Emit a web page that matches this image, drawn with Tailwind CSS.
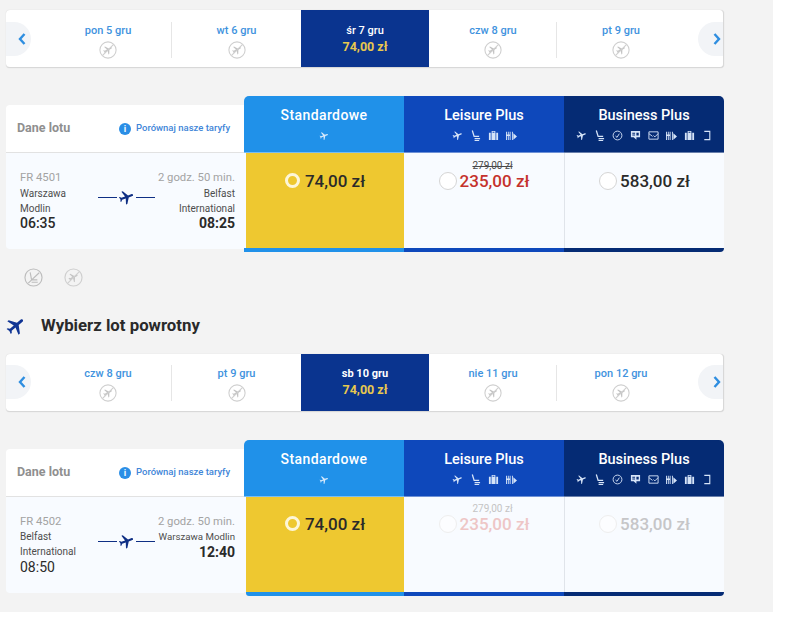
<!DOCTYPE html>
<html lang="pl">
<head>
    <meta charset="UTF-8">
    <meta name="viewport" content="width=device-width, initial-scale=1.0">
    <title>Wybierz lot</title>
    <script src="https://cdn.jsdelivr.net/npm/@tailwindcss/browser@4"></script>
</head>
<body class="bg-white font-['Roboto',sans-serif]">
    <!-- Shared icons -->
    <svg class="hidden">
        <symbol id="plane" viewBox="0 0 24 24"><path fill="currentColor" d="M21 16v-2l-8-5V3.5c0-.83-.67-1.5-1.5-1.5S10 2.67 10 3.5V9l-8 5v2l8-2.5V19l-2 1.5V22l3.5-1 3.5 1v-1.5L13 19v-5.5l8 2.5z"/></symbol>
        <symbol id="seat" viewBox="0 0 12 12"><path fill="none" stroke="currentColor" stroke-width="1.4" d="M2.5 .5 4.5 7H10M5 9.5h6M5 11.5h5"/></symbol>
        <symbol id="clock" viewBox="0 0 12 12"><circle cx="6" cy="6" r="4.8" fill="none" stroke="currentColor"/><path fill="none" stroke="currentColor" d="M3.8 6.5 5.5 8 8 4"/></symbol>
        <symbol id="card" viewBox="0 0 12 12"><path fill="currentColor" d="M1 1h10v7H7v2.5L4 8H1zM2.5 3v1h3V3zm0 2v1h3V5zM7 3v3h2.5V3z"/></symbol>
        <symbol id="mail" viewBox="0 0 12 12"><path fill="none" stroke="currentColor" d="M1 2h10v8H1zM1 4l4 3M11 4 7.5 7.5 6 6"/></symbol>
        <symbol id="food" viewBox="0 0 12 12"><path fill="currentColor" d="M0 2h1v9H0zM2 2h1v9H2zM4 2h1v9H4zM0 5h5v1.5H0zM6.5 2h1v9h-1zM8 3.5 12 7l-4 3.5z"/></symbol>
        <symbol id="bag" viewBox="0 0 12 12"><path fill="currentColor" d="M4 1h4v2h3v8H1V3h3zm1 1v1h2V2zM3 3v8h.8V3zm5.2 0v8H9V3z"/></symbol>
        <symbol id="phone" viewBox="0 0 12 12"><path fill="none" stroke="currentColor" stroke-width="1.2" d="M2.5 1.5h6v9h-6"/></symbol>
        <symbol id="noflight" viewBox="0 0 20 20">
            <circle cx="10" cy="10" r="9" fill="none" stroke="#cfcfcf" stroke-width="1.2"/>
            <use href="#plane" x="4" y="4" width="12" height="12" transform="rotate(60 10 10)" class="text-[#c4c4c4]"/>
            <path stroke="#cfcfcf" stroke-width="1.2" d="M4 16 16 4"/>
        </symbol>
        <symbol id="noseat" viewBox="0 0 20 20">
            <circle cx="10" cy="10" r="9" fill="none" stroke="#bdbdbd" stroke-width="1.2"/>
            <path fill="none" stroke="#bdbdbd" stroke-width="1.2" d="M6.5 4.5 8 12.5h6M8 15h6.5M4.5 16 16 5"/>
        </symbol>
    </svg>

    <main class="w-[773px] h-[612px] bg-[#f3f3f3] pt-[10px] pl-[6px]">
        <!-- Daty: wylot -->
        <section class="relative w-[718px] h-[58px] bg-white rounded-[4px] border-b border-r border-[#d8d8d8] flex pl-[38px] shadow-[0_0_1px_#cccccc]">
            <div class="absolute left-0 top-[12px] w-[25px] h-[34px] bg-[#f2f4f7] rounded-r-full flex items-center justify-center pl-[6px] text-[#2f8ee0]">
                <svg class="w-[8px] h-[12px]" viewBox="0 0 8 12"><path fill="none" stroke="currentColor" stroke-width="2.4" d="M6.5 1 2 6l4.5 5"/></svg>
            </div>
            <div class="w-[128px] flex flex-col items-center pt-[13px] relative">
                <p class="text-[11px] leading-[15px] font-medium text-[#3f93de]">pon 5 gru</p>
                <svg class="w-[18px] h-[18px] mt-[3px]"><use href="#noflight"/></svg>
                <span class="absolute right-0 top-[12px] h-[36px] w-px bg-[#e6e6e6]"></span>
            </div>
            <div class="w-[129px] flex flex-col items-center pt-[13px]">
                <p class="text-[11px] leading-[15px] font-medium text-[#3f93de]">wt 6 gru</p>
                <svg class="w-[18px] h-[18px] mt-[3px]"><use href="#noflight"/></svg>
            </div>
            <div class="w-[128px] bg-[#0a348f] flex flex-col items-center pt-[13px]">
                <p class="text-[11px] leading-[15px] font-medium text-white">śr 7 gru</p>
                <p class="text-[12.5px] leading-[18px] font-bold text-[#e8c84e]">74,00 zł</p>
            </div>
            <div class="w-[128px] flex flex-col items-center pt-[13px] relative">
                <p class="text-[11px] leading-[15px] font-medium text-[#3f93de]">czw 8 gru</p>
                <svg class="w-[18px] h-[18px] mt-[3px]"><use href="#noflight"/></svg>
                <span class="absolute right-0 top-[12px] h-[36px] w-px bg-[#e6e6e6]"></span>
            </div>
            <div class="w-[128px] flex flex-col items-center pt-[13px]">
                <p class="text-[11px] leading-[15px] font-medium text-[#3f93de]">pt 9 gru</p>
                <svg class="w-[18px] h-[18px] mt-[3px]"><use href="#noflight"/></svg>
            </div>
            <div class="absolute right-0 top-[12px] w-[25px] h-[34px] bg-[#f2f4f7] rounded-l-full flex items-center justify-center pl-[13px] text-[#2f8ee0]">
                <svg class="w-[8px] h-[12px]" viewBox="0 0 8 12"><path fill="none" stroke="currentColor" stroke-width="2.4" d="M1.5 1 6 6l-4.5 5"/></svg>
            </div>
        </section>

        <!-- Taryfy: wylot -->
        <section class="flex w-[718px] mt-[28px]">
            <div class="w-[238px] pt-[9px]">
                <div class="h-[48px] bg-white rounded-tl-[4px] border-b border-[#e2e2e2] flex items-center pl-[11px]">
                    <p class="text-[12.5px] font-bold text-[#8f8f8f] w-[102px]">Dane lotu</p>
                    <span class="w-[12px] h-[12px] rounded-full bg-[#2a8ee6] text-white text-[9px] leading-[12px] font-bold text-center">i</span>
                    <p class="ml-[5px] text-[9.5px] font-medium text-[#3f86d8] whitespace-nowrap">Porównaj nasze taryfy</p>
                </div>
                <div class="h-[96px] bg-[#f8fbff] rounded-bl-[4px] pl-[14px] pr-[9px] pt-[18px]">
                    <div class="flex justify-between text-[11.3px] leading-[14px] text-[#a3a3a3]">
                        <p>FR 4501</p>
                        <p>2 godz. 50 min.</p>
                    </div>
                    <div class="flex">
                        <div class="w-[78px] text-[10px] leading-[15px] text-[#4d4d4d] pt-px">
                            <p>Warszawa</p>
                            <p>Modlin</p>
                            <p class="text-[14px] leading-[15px] font-medium text-[#2a2a2a]">06:35</p>
                        </div>
                        <div class="w-[58px] flex items-center h-[16px] mt-[4px] text-[#0f2f84]">
                            <span class="w-[19px] h-px bg-current"></span>
                            <svg class="w-[17px] h-[17px] mx-px rotate-[70deg]"><use href="#plane"/></svg>
                            <span class="w-[19px] h-px bg-current"></span>
                        </div>
                        <div class="w-[79px] text-right text-[10px] leading-[15px] text-[#4d4d4d] pt-px">
                            <p>Belfast</p>
                            <p>International</p>
                            <p class="text-[14px] leading-[15px] font-bold text-[#2a2a2a]">08:25</p>
                        </div>
                    </div>
                </div>
            </div>
            <div class="w-[160px]">
                <div class="h-[57px] bg-[#2091e9] rounded-tl-[5px] flex flex-col items-center pt-[10px] text-white border-b border-white/40">
                    <p class="text-[14px] leading-[18px] font-medium tracking-[0.4px]">Standardowe</p>
                    <svg class="w-[10px] h-[10px] mt-[7px] rotate-[70deg] text-[#d6e9fb]"><use href="#plane"/></svg>
                </div>
                <div class="bg-[#f8fbff] pl-[2px]">
                    <div class="h-[95px] bg-[#eec830] flex justify-center items-start pt-[19px] gap-[5px]">
                        <span class="w-[15px] h-[15px] mt-[1px] rounded-full border-[3px] border-[#fdf6d8]"></span>
                        <p class="text-[17px] leading-[18px] font-medium text-[#2a2a2a]">74,00 zł</p>
                    </div>
                </div>
                <div class="h-[4px] bg-[#2091e9]"></div>
            </div>
            <div class="w-[160px]">
                <div class="h-[57px] bg-[#0e48bb] flex flex-col items-center pt-[11px] text-white border-b border-white/40">
                    <p class="text-[14.5px] leading-[18px] font-medium">Leisure Plus</p>
                    <div class="flex gap-[7px] mt-[5px] text-[#d6e4f8]">
                        <svg class="w-[11px] h-[11px] rotate-[70deg]"><use href="#plane"/></svg>
                        <svg class="w-[11px] h-[11px]"><use href="#seat"/></svg>
                        <svg class="w-[11px] h-[11px]"><use href="#bag"/></svg>
                        <svg class="w-[11px] h-[11px]"><use href="#food"/></svg>
                    </div>
                </div>
                <div class="h-[95px] bg-[#f8fbff] flex flex-col items-center pt-[7px]">
                    <p class="text-[10px] leading-[11px] text-[#4a4a4a] line-through ml-[17px]">279,00 zł</p>
                    <div class="flex items-center gap-[3px]">
                        <span class="w-[18px] h-[18px] rounded-full bg-white border border-[#d5d5d5]"></span>
                        <p class="text-[17px] leading-[20px] font-medium text-[#c5322c]">235,00 zł</p>
                    </div>
                </div>
                <div class="h-[4px] bg-[#0e48bb]"></div>
            </div>
            <div class="w-[160px] border-l border-[#e0e4ea]">
                <div class="h-[57px] bg-[#052b74] rounded-tr-[5px] -ml-px flex flex-col items-center pt-[11px] text-white border-b border-white/40">
                    <p class="text-[14.5px] leading-[18px] font-medium">Business Plus</p>
                    <div class="flex gap-[7px] mt-[5px] text-[#d6e4f8]">
                        <svg class="w-[11px] h-[11px] rotate-[70deg]"><use href="#plane"/></svg>
                        <svg class="w-[11px] h-[11px]"><use href="#seat"/></svg>
                        <svg class="w-[11px] h-[11px]"><use href="#clock"/></svg>
                        <svg class="w-[11px] h-[11px]"><use href="#card"/></svg>
                        <svg class="w-[11px] h-[11px]"><use href="#mail"/></svg>
                        <svg class="w-[11px] h-[11px]"><use href="#food"/></svg>
                        <svg class="w-[11px] h-[11px]"><use href="#bag"/></svg>
                        <svg class="w-[11px] h-[11px]"><use href="#phone"/></svg>
                    </div>
                </div>
                <div class="h-[95px] bg-[#f8fbff] flex justify-center pt-[18px]">
                    <div class="flex items-center gap-[3px] h-[20px]">
                        <span class="w-[18px] h-[18px] rounded-full bg-white border border-[#d5d5d5]"></span>
                        <p class="text-[17px] leading-[20px] font-medium text-[#2a2a2a]">583,00 zł</p>
                    </div>
                </div>
                <div class="h-[4px] bg-[#052b74] -ml-px rounded-br-[4px]"></div>
            </div>
        </section>

        <!-- Uwagi do lotu -->
        <div class="flex gap-[21px] pl-[18px] mt-[16px]">
            <svg class="w-[19px] h-[19px]"><use href="#noseat"/></svg>
            <svg class="w-[19px] h-[19px]"><use href="#noflight"/></svg>
        </div>

        <!-- Lot powrotny -->
        <div class="flex items-center h-[20px] mt-[29px] -ml-px">
            <svg class="w-[22px] h-[22px] rotate-[50deg] text-[#0f3494]"><use href="#plane"/></svg>
            <h2 class="ml-[14px] text-[16.8px] font-bold text-[#2a2a2a]">Wybierz lot powrotny</h2>
        </div>

        <!-- Daty: powrót -->
        <section class="relative w-[718px] h-[58px] mt-[18px] bg-white rounded-[4px] border-b border-r border-[#d8d8d8] flex pl-[38px] shadow-[0_0_1px_#cccccc]">
            <div class="absolute left-0 top-[11px] w-[25px] h-[34px] bg-[#f2f4f7] rounded-r-full flex items-center justify-center pl-[6px] text-[#2f8ee0]">
                <svg class="w-[8px] h-[12px]" viewBox="0 0 8 12"><path fill="none" stroke="currentColor" stroke-width="2.4" d="M6.5 1 2 6l4.5 5"/></svg>
            </div>
            <div class="w-[128px] flex flex-col items-center pt-[12px] relative">
                <p class="text-[11px] leading-[15px] font-medium text-[#3f93de]">czw 8 gru</p>
                <svg class="w-[18px] h-[18px] mt-[3px]"><use href="#noflight"/></svg>
                <span class="absolute right-0 top-[11px] h-[36px] w-px bg-[#e6e6e6]"></span>
            </div>
            <div class="w-[129px] flex flex-col items-center pt-[12px]">
                <p class="text-[11px] leading-[15px] font-medium text-[#3f93de]">pt 9 gru</p>
                <svg class="w-[18px] h-[18px] mt-[3px]"><use href="#noflight"/></svg>
            </div>
            <div class="w-[128px] bg-[#0a348f] flex flex-col items-center pt-[12px]">
                <p class="text-[11px] leading-[15px] font-bold text-white">sb 10 gru</p>
                <p class="text-[12.5px] leading-[18px] font-bold text-[#e8c84e]">74,00 zł</p>
            </div>
            <div class="w-[128px] flex flex-col items-center pt-[12px] relative">
                <p class="text-[11px] leading-[15px] font-medium text-[#3f93de]">nie 11 gru</p>
                <svg class="w-[18px] h-[18px] mt-[3px]"><use href="#noflight"/></svg>
                <span class="absolute right-0 top-[11px] h-[36px] w-px bg-[#e6e6e6]"></span>
            </div>
            <div class="w-[128px] flex flex-col items-center pt-[12px]">
                <p class="text-[11px] leading-[15px] font-medium text-[#3f93de]">pon 12 gru</p>
                <svg class="w-[18px] h-[18px] mt-[3px]"><use href="#noflight"/></svg>
            </div>
            <div class="absolute right-0 top-[11px] w-[25px] h-[34px] bg-[#f2f4f7] rounded-l-full flex items-center justify-center pl-[13px] text-[#2f8ee0]">
                <svg class="w-[8px] h-[12px]" viewBox="0 0 8 12"><path fill="none" stroke="currentColor" stroke-width="2.4" d="M1.5 1 6 6l-4.5 5"/></svg>
            </div>
        </section>

        <!-- Taryfy: powrót -->
        <section class="flex w-[718px] mt-[28px]">
            <div class="w-[238px] pt-[9px]">
                <div class="h-[48px] bg-white rounded-tl-[4px] border-b border-[#e2e2e2] flex items-center pl-[11px]">
                    <p class="text-[12.5px] font-bold text-[#8f8f8f] w-[102px]">Dane lotu</p>
                    <span class="w-[12px] h-[12px] rounded-full bg-[#2a8ee6] text-white text-[9px] leading-[12px] font-bold text-center">i</span>
                    <p class="ml-[5px] text-[9.5px] font-medium text-[#3f86d8] whitespace-nowrap">Porównaj nasze taryfy</p>
                </div>
                <div class="h-[96px] bg-[#f8fbff] rounded-bl-[4px] pl-[14px] pr-[9px] pt-[18px]">
                    <div class="flex justify-between text-[11.3px] leading-[14px] text-[#a3a3a3]">
                        <p>FR 4502</p>
                        <p>2 godz. 50 min.</p>
                    </div>
                    <div class="flex">
                        <div class="w-[78px] text-[10px] leading-[15px] text-[#4d4d4d]">
                            <p>Belfast</p>
                            <p>International</p>
                            <p class="text-[14px] leading-[16px] text-[#2a2a2a]">08:50</p>
                        </div>
                        <div class="w-[58px] flex items-center h-[16px] mt-[4px] text-[#0f2f84]">
                            <span class="w-[19px] h-px bg-current"></span>
                            <svg class="w-[17px] h-[17px] mx-px rotate-[70deg]"><use href="#plane"/></svg>
                            <span class="w-[19px] h-px bg-current"></span>
                        </div>
                        <div class="w-[79px] text-right text-[9.7px] leading-[15px] text-[#4d4d4d] whitespace-nowrap">
                            <p>Warszawa Modlin</p>
                            <p class="text-[14px] leading-[16px] font-bold text-[#2a2a2a]">12:40</p>
                        </div>
                    </div>
                </div>
            </div>
            <div class="w-[160px]">
                <div class="h-[57px] bg-[#2091e9] rounded-tl-[5px] flex flex-col items-center pt-[10px] text-white border-b border-white/40">
                    <p class="text-[14px] leading-[18px] font-medium tracking-[0.4px]">Standardowe</p>
                    <svg class="w-[10px] h-[10px] mt-[7px] rotate-[70deg] text-[#d6e9fb]"><use href="#plane"/></svg>
                </div>
                <div class="bg-[#f8fbff] pl-[2px]">
                    <div class="h-[95px] bg-[#eec830] flex justify-center items-start pt-[18px] gap-[5px]">
                        <span class="w-[15px] h-[15px] mt-[1px] rounded-full border-[3px] border-[#fdf6d8]"></span>
                        <p class="text-[17px] leading-[18px] font-medium text-[#2a2a2a]">74,00 zł</p>
                    </div>
                </div>
                <div class="h-[4px] bg-[#2091e9] ml-[2px] rounded-bl-[3px]"></div>
            </div>
            <div class="w-[160px]">
                <div class="h-[57px] bg-[#0e48bb] flex flex-col items-center pt-[11px] text-white border-b border-white/40">
                    <p class="text-[14.5px] leading-[18px] font-medium">Leisure Plus</p>
                    <div class="flex gap-[7px] mt-[5px] text-[#d6e4f8]">
                        <svg class="w-[11px] h-[11px] rotate-[70deg]"><use href="#plane"/></svg>
                        <svg class="w-[11px] h-[11px]"><use href="#seat"/></svg>
                        <svg class="w-[11px] h-[11px]"><use href="#bag"/></svg>
                        <svg class="w-[11px] h-[11px]"><use href="#food"/></svg>
                    </div>
                </div>
                <div class="h-[95px] bg-[#f8fbff] flex flex-col items-center pt-[6px]">
                    <p class="text-[10px] leading-[11px] text-[#c4c4c4] ml-[17px]">279,00 zł</p>
                    <div class="flex items-center gap-[3px]">
                        <span class="w-[18px] h-[18px] rounded-full bg-white/60 border border-[#eeeeee]"></span>
                        <p class="text-[17px] leading-[20px] font-medium text-[#eec6c6]">235,00 zł</p>
                    </div>
                </div>
                <div class="h-[4px] bg-[#0e48bb]"></div>
            </div>
            <div class="w-[160px] border-l border-[#e0e4ea]">
                <div class="h-[57px] bg-[#052b74] rounded-tr-[5px] -ml-px flex flex-col items-center pt-[11px] text-white border-b border-white/40">
                    <p class="text-[14.5px] leading-[18px] font-medium">Business Plus</p>
                    <div class="flex gap-[7px] mt-[5px] text-[#d6e4f8]">
                        <svg class="w-[11px] h-[11px] rotate-[70deg]"><use href="#plane"/></svg>
                        <svg class="w-[11px] h-[11px]"><use href="#seat"/></svg>
                        <svg class="w-[11px] h-[11px]"><use href="#clock"/></svg>
                        <svg class="w-[11px] h-[11px]"><use href="#card"/></svg>
                        <svg class="w-[11px] h-[11px]"><use href="#mail"/></svg>
                        <svg class="w-[11px] h-[11px]"><use href="#food"/></svg>
                        <svg class="w-[11px] h-[11px]"><use href="#bag"/></svg>
                        <svg class="w-[11px] h-[11px]"><use href="#phone"/></svg>
                    </div>
                </div>
                <div class="h-[95px] bg-[#f8fbff] flex justify-center pt-[17px]">
                    <div class="flex items-center gap-[3px] h-[20px]">
                        <span class="w-[18px] h-[18px] rounded-full bg-white/60 border border-[#eeeeee]"></span>
                        <p class="text-[17px] leading-[20px] font-medium text-[#c6c6c8]">583,00 zł</p>
                    </div>
                </div>
                <div class="h-[4px] bg-[#052b74] -ml-px rounded-br-[4px]"></div>
            </div>
        </section>
    </main>
</body>
</html>
